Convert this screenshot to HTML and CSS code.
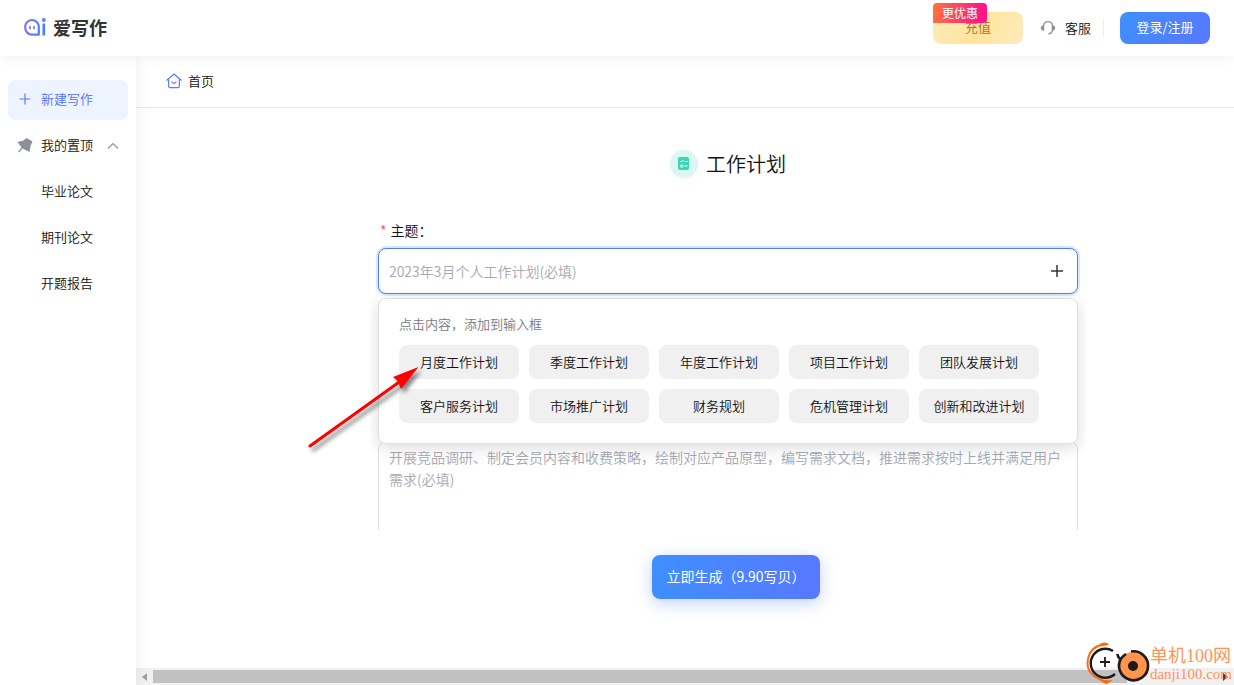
FILE: index.html
```html
<!DOCTYPE html>
<html lang="zh-CN">
<head>
<meta charset="utf-8">
<title>爱写作</title>
<link rel="stylesheet" href="styles.css">
</head>
<body>
<header class="topbar">
  <div class="brand">
    <svg class="brand-mark" viewBox="0 0 24 20" aria-hidden="true">
      <defs><linearGradient id="mark" x1="0" y1="0" x2="1" y2="0"><stop offset="0" stop-color="#8b73f8"/><stop offset="1" stop-color="#4a80ff"/></linearGradient></defs>
      <path d="M14.800 17.600H8A6.800 6.800 0 0 1 1.200 10.800V9.800A6.800 6.800 0 0 1 14.800 9.800Z" fill="none" stroke="url(#mark)" stroke-width="2.200" stroke-linejoin="round"/>
      <path d="M6 9.500v2M10 9.500v2" stroke="#6c78fb" stroke-width="1.700" stroke-linecap="round"/>
      <path d="M19.800 6.500v12" stroke="#4a80ff" stroke-width="2.700"/>
      <circle cx="19.800" cy="3" r="1.900" fill="#5a7cff"/>
    </svg>
    <span class="brand-name">爱写作</span>
  </div>
  <div class="actions">
    <div class="recharge-wrap">
      <button class="recharge" type="button">充值</button>
      <span class="offer">更优惠</span>
    </div>
    <a class="support" href="#">
      <svg viewBox="0 0 16 16" width="16" height="16" aria-hidden="true"><path d="M3.500 6C3.500 .2 12.500 .2 12.500 6V9.500c0 2.500-1.500 4-4 4.500" fill="none" stroke="#8b909b" stroke-width="1.300"/><path d="M4.200 5.200v5.600Q.8 10.500.8 8t3.400-2.800zM11.800 5.200v5.600q3.400-.3 3.400-2.800t-3.400-2.800z" fill="#8b909b"/></svg>
      <span>客服</span>
    </a>
    <button class="login" type="button">登录/注册</button>
  </div>
</header>
<div class="shell">
  <nav class="sidebar">
    <a class="nav-item active" href="#">
      <svg viewBox="0 0 16 16" width="16" height="16" aria-hidden="true"><path d="M8 2.500v11M2.500 8h11" stroke="#5b7cff" stroke-width="1.200"/></svg>
      <span>新建写作</span>
    </a>
    <button class="nav-item" type="button">
      <svg viewBox="0 0 16 16" width="16" height="16" aria-hidden="true"><path d="M9.500 1L15.500 4.500 13.500 9 12.500 15 8 12.800 5.500 11.500 2 15.500 1 14.700 4.500 10.500 .5 5 6.500 3.500z" fill="#8b909b"/></svg>
      <span>我的置顶</span>
      <svg class="chevron" viewBox="0 0 12 12" width="12" height="12" aria-hidden="true"><path d="M1 9.500l5-5 5 5" fill="none" stroke="#8b909b" stroke-width="1.100"/></svg>
    </button>
    <a class="nav-item sub" href="#">毕业论文</a>
    <a class="nav-item sub" href="#">期刊论文</a>
    <a class="nav-item sub" href="#">开题报告</a>
  </nav>
  <main class="main">
    <div class="viewport">
      <div class="canvas">
        <div class="crumb">
          <svg viewBox="0 0 16 16" width="16" height="16" aria-hidden="true"><path d="M.8 7.200L8 1l7.200 6.200M2.600 6v7q0 1.600 1.600 1.600h7.600q1.600 0 1.600-1.600V6M6 9Q8 11.800 10 9" fill="none" stroke="#5b7cff" stroke-width="1.200" stroke-linecap="round" stroke-linejoin="round"/></svg>
          <a href="#">首页</a>
        </div>
        <form class="planner">
          <div class="fields">
            <h1 class="title">
              <svg viewBox="0 0 28 28" width="28" height="28" aria-hidden="true"><circle cx="14" cy="14" r="14" fill="#dcf7f2"/><rect x="8" y="7" width="11" height="13" rx="2" fill="#36d6b7"/><path d="M10 11l1.300 1.200 2-2.200M14.500 11.500h3M14.500 16h3" fill="none" stroke="#fff" stroke-width="1"/><circle cx="11.800" cy="16" r="1.300" fill="none" stroke="#fff"/></svg>
              <span>工作计划</span>
            </h1>
            <label class="label" for="topic"><span class="star">*</span>主题：</label>
            <div class="field">
              <div class="topic-box">
                <input id="topic" class="topic" type="text" placeholder="2023年3月个人工作计划(必填)">
                <button class="add" type="button" aria-label="添加">
                  <svg viewBox="0 0 14 14" width="14" height="14" aria-hidden="true"><path d="M7 1v12M1 7h12" stroke="#303833" stroke-width="1.500"/></svg>
                </button>
              </div>
              <div class="popup">
                <p class="hint">点击内容，添加到输入框</p>
                <div class="options">
                  <button type="button">月度工作计划</button>
                  <button type="button">季度工作计划</button>
                  <button type="button">年度工作计划</button>
                  <button type="button">项目工作计划</button>
                  <button type="button">团队发展计划</button>
                  <button type="button">客户服务计划</button>
                  <button type="button">市场推广计划</button>
                  <button type="button">财务规划</button>
                  <button type="button">危机管理计划</button>
                  <button type="button">创新和改进计划</button>
                </div>
              </div>
            </div>
            <textarea class="content" aria-label="工作内容" placeholder="开展竞品调研、制定会员内容和收费策略，绘制对应产品原型，编写需求文档，推进需求按时上线并满足用户需求(必填)"></textarea>
          </div>
          <button class="generate" type="submit">立即生成（9.90写贝）</button>
        </form>
      </div>
    </div>
    <div class="hscroll" aria-hidden="true">
      <svg viewBox="0 0 17 16" width="17" height="16"><path d="M11 4v8L6 8z" fill="#a0a0a0"/></svg>
      <div class="thumb"></div>
      <svg viewBox="0 0 17 16" width="17" height="16"><path d="M6 4v8l5-4z" fill="#404040"/></svg>
    </div>
  </main>
</div>
<svg class="arrow" viewBox="0 0 126 96" width="126" height="96" aria-hidden="true">
  <path d="M10 86L102 20" stroke="#f00" stroke-width="3" stroke-linecap="round"/>
  <path d="M118.500 7L93 17 98 21.500 101 29z" fill="#f00"/>
</svg>
<div class="watermark">
  <svg viewBox="0 0 64 44" width="64" height="44" aria-hidden="true">
    <path d="M12 5C5 8 1.500 15 1.500 22S6 36 16 39" fill="none" stroke="#ff6a0c" stroke-width="2"/>
    <path d="M9 6.500Q14 2 18 1.500T23 4L17 5zM11 36.500Q18 40 27 39L21 43Q16 42 11 36.500z" fill="#ff6a0c"/>
    <path d="M27 10A14.500 14.500 0 1 0 29 33" fill="none" stroke="#221a1a" stroke-width="2.400"/>
    <path d="M14 21h10M19 16v10" stroke="#221a1a" stroke-width="1.800"/>
    <circle cx="47" cy="25" r="14" fill="#ff944d"/>
    <path d="M31.500 13q0 3 2.500 5M45 10.500A14.500 14.500 0 1 1 35 17.500Q37 15 40 13" fill="none" stroke="#221a1a" stroke-width="2.700"/>
    <circle cx="47" cy="25" r="5" fill="#221a1a"/>
  </svg>
  <div class="watermark-text"><span class="wm-name">单机100网</span><span class="wm-url">danji100.com</span></div>
</div>
</body>
</html>
```

FILE: styles.css
```css
* { box-sizing: border-box; }
body {
  margin: 0;
  height: 100vh;
  display: flex;
  flex-direction: column;
  overflow: hidden;
  position: relative;
  font: 350 13px/20px "Noto Sans CJK SC", sans-serif;
  color: #111;
  background: #fff;
}
button, input, textarea { font: inherit; color: inherit; border: 0; background: none; }
button { padding: 0; cursor: pointer; }
a { color: inherit; text-decoration: none; }
svg { display: block; flex: none; }

.topbar {
  flex: none;
  height: 56px;
  padding: 0 24px;
  display: flex;
  align-items: center;
  justify-content: space-between;
  background: #fff;
  box-shadow: 0 2px 12px rgba(0, 0, 0, .06);
  z-index: 2;
}
.brand { display: flex; align-items: center; gap: 5px; padding-bottom: 2px; }
.brand-mark { width: 24px; height: 20px; }
.brand-name { font-size: 18px; line-height: 24px; font-weight: 700; color: #333; }
.actions { display: flex; align-items: center; }
.recharge-wrap { position: relative; }
.recharge, .login { width: 90px; height: 32px; padding-bottom: 2px; border-radius: 8px; }
.recharge { display: block; color: #a8702c; background: linear-gradient(120deg, #fcebbd, #ffe49c 50%, #fcebbd); }
.offer {
  position: absolute;
  left: 0;
  top: -9px;
  width: 54px;
  height: 20px;
  text-align: center;
  font-size: 12px;
  font-weight: 400;
  color: #fff;
  border-radius: 4px 4px 4px 0;
  background: linear-gradient(100deg, #ff7539, #ff1687 85%);
}
.support {
  display: flex;
  align-items: center;
  gap: 9px;
  margin-left: 17px;
  padding-right: 12px;
  border-right: 1px solid #eee;
}
.login { margin-left: 16px; font-weight: 400; color: #fff; background: linear-gradient(120deg, #3e8fff, #5878ff); }

.shell { flex: 1; min-height: 0; display: flex; }
.sidebar {
  width: 136px;
  flex: none;
  padding: 24px 8px;
  display: flex;
  flex-direction: column;
  gap: 6px;
  background: #fff;
  box-shadow: 2px 0 12px rgba(0, 0, 0, .06);
  z-index: 1;
}
.nav-item {
  height: 40px;
  padding: 0 9px 2px;
  display: flex;
  align-items: center;
  gap: 8px;
  border-radius: 8px;
}
.nav-item.active { background: #edf3ff; color: #4e70ff; }
.nav-item.sub { padding-left: 33px; }
.chevron { margin-left: auto; }

.main { flex: 1; min-width: 0; display: flex; flex-direction: column; }
.viewport { flex: 1; min-height: 0; overflow: hidden; }
.canvas { min-width: 1200px; height: 100%; display: flex; flex-direction: column; }
.crumb {
  height: 52px;
  padding: 0 30px 2px;
  display: flex;
  align-items: center;
  gap: 6px;
  border-bottom: 1px solid #eaeaea;
}
.planner { display: flex; flex-direction: column; align-items: center; }
.fields {
  width: 716px;
  height: 422px;
  padding: 42px 8px 0;
  margin-right: 16px;
  overflow: hidden;
}
.title {
  margin: 0 0 41px;
  display: flex;
  align-items: center;
  justify-content: center;
  gap: 8px;
  font-size: 20px;
  line-height: 28px;
  font-weight: inherit;
}
.label { display: block; font-size: 14px; line-height: 22px; margin-bottom: 7px; }
.star { color: #ff4d4f; margin: 0 4px 0 2px; }
.field { position: relative; }
.topic-box {
  height: 46px;
  display: flex;
  align-items: center;
  border: 1px solid #4e7dff;
  border-radius: 8px;
  box-shadow: 0 0 0 2px #dce5ff;
  background: #fff;
}
.topic { flex: 1; min-width: 0; height: 44px; padding: 0 10px; font-size: 14px; line-height: 22px; outline: 0; }
.add { padding: 13px; }
::placeholder { color: #a6a9af; opacity: 1; }
.popup {
  position: absolute;
  top: 50px;
  left: 0;
  right: 0;
  padding: 15px 20px 20px;
  border: 1px solid #dfe0e3;
  border-radius: 8px;
  background: #fff;
  box-shadow: 0 4px 16px rgba(0, 0, 0, .14);
  z-index: 1;
}
.hint { margin: 0 0 11px; color: #747983; }
.options { display: flex; flex-wrap: wrap; gap: 10px; }
.options button { width: 120px; height: 34px; padding-bottom: 1px; border-radius: 8px; background: #f0f0f0; }
.content {
  display: block;
  width: 100%;
  height: 140px;
  margin-top: 147px;
  padding: 4px 10px;
  border: 1px solid #dfe0e3;
  border-radius: 8px;
  font-size: 14px;
  line-height: 22px;
  resize: none;
}
.generate {
  width: 168px;
  height: 44px;
  padding-bottom: 2px;
  margin-top: 25px;
  border-radius: 8px;
  font-size: 14px;
  font-weight: 400;
  color: #fff;
  background: linear-gradient(100deg, #3e8fff, #5878ff);
  box-shadow: 0 4px 16px rgba(78, 125, 255, .35);
}
.hscroll { flex: none; height: 17px; display: flex; align-items: center; background: #f1f1f1; }
.thumb { flex: 0 1 974px; height: 13px; background: #c1c1c1; }
.hscroll svg:last-child { margin-left: auto; }

.arrow { position: absolute; left: 300px; top: 360px; z-index: 3; filter: drop-shadow(3px 4px 2px rgba(0, 0, 0, .5)); pointer-events: none; }
.watermark { position: absolute; right: 2px; bottom: 0; z-index: 3; display: flex; align-items: center; color: #ff9459; pointer-events: none; }
.watermark-text { display: flex; flex-direction: column; padding-top: 2px; font-family: "Liberation Serif", "Noto Sans CJK SC", serif; font-weight: 400; white-space: nowrap; }
.wm-name { font-size: 18px; line-height: 20px; }
.wm-url { font-size: 15px; line-height: 16px; }
```
